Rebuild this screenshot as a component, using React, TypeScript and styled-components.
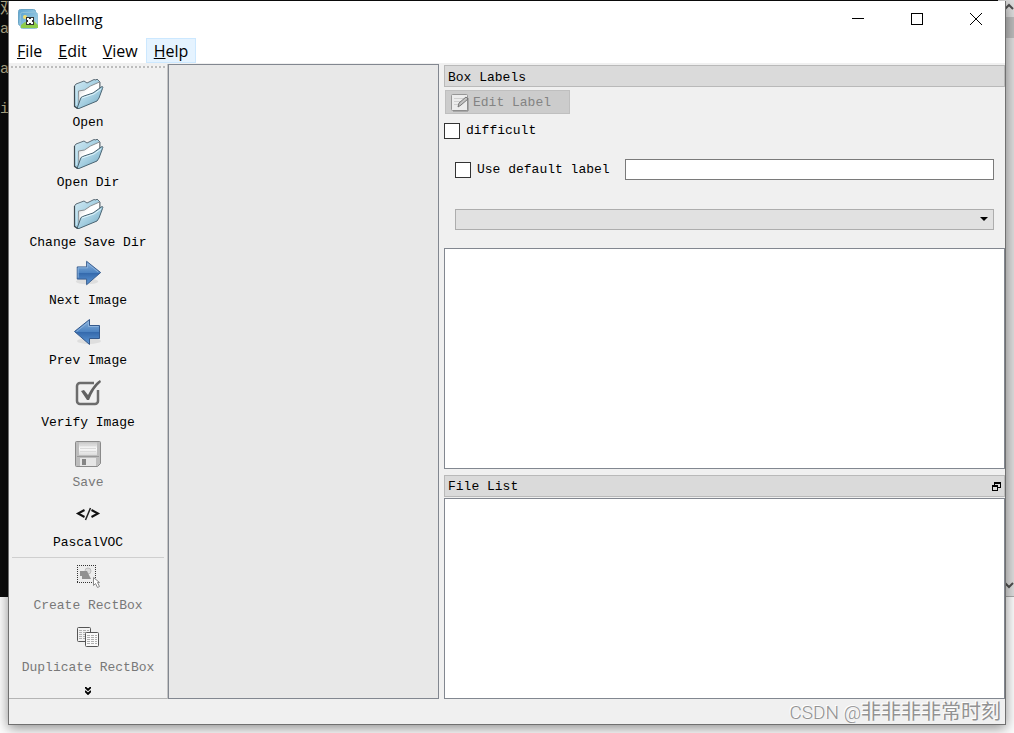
import React from 'react';
import styled, { createGlobalStyle } from 'styled-components';

const MONO = '"Liberation Mono", "DejaVu Sans Mono", monospace';
const UI = '"Open Sans", "Noto Sans", sans-serif';

const GlobalStyle = createGlobalStyle`
  *, *::before, *::after { box-sizing: border-box; }
  body { margin: 0; background: #fff; color: #000; font: 13px/16px ${MONO}; }
  button, input, select { font: inherit; color: inherit; }
`;

const Desktop = styled.div`
  position: relative;
  display: flex;
  min-height: 100vh;
  padding: 1px 8px 8px;
  overflow: hidden;
  background: #fdfdfd;
`;

const Terminal = styled.div`
  position: absolute;
  top: 0;
  left: 0;
  right: 0;
  height: 597px;
  display: flex;
  justify-content: space-between;
  background: #0c0c0c;
`;

const TerminalText = styled.pre`
  margin: 0;
  color: #b8b08c;
  font: 15px/20px "Liberation Mono", "Noto Sans CJK SC", monospace;
`;

const ScrollTrack = styled.div`
  width: 16px;
  display: flex;
  flex-direction: column;
  align-items: flex-end;
  background: #dedede;
  border-bottom: 1px solid #aaa;

  svg { display: block; }
`;

const ScrollThumb = styled.div`
  width: 100%;
  height: 21px;
  margin-bottom: auto;
  background: #bcbcbc;
`;

const Window = styled.main`
  position: relative;
  flex: 1;
  min-width: 0;
  display: flex;
  flex-direction: column;
  background: #f0f0f0;
  border: 1px solid #707070;
  border-top: 0;
  box-shadow: 0 3px 12px rgba(0, 0, 0, 0.45);
`;

const TitleBar = styled.header`
  display: flex;
  align-items: center;
  height: 37px;
  padding: 0 0 2px 9px;
  background: #fff;
`;

const Title = styled.h1`
  flex: 1;
  margin: 0 0 0 5px;
  font: 400 15px/20px ${UI};
`;

const WindowButton = styled.button`
  display: grid;
  place-items: center;
  width: 59px;
  height: 34px;
  padding: 0;
  border: 0;
  background: none;
`;

const MenuBar = styled.nav`
  display: flex;
  height: 25px;
  background: #fff;
`;

const MenuItem = styled.button<{ $active?: boolean }>`
  height: 25px;
  padding: 0 7px;
  border: 1px solid ${p => (p.$active ? '#cce8ff' : 'transparent')};
  background: ${p => (p.$active ? '#e5f3ff' : 'none')};
  font: 16px/20px ${UI};

  &::first-letter { text-decoration: underline; }
`;

const Body = styled.div`
  flex: 1;
  display: grid;
  grid-template-columns: 159px minmax(160px, 271fr) minmax(380px, 566fr);
  border-top: 1px solid #f0f0f0;
`;

const ToolBar = styled.aside`
  display: flex;
  flex-direction: column;
  border-right: 1px solid #c4c4c4;
  border-bottom: 1px solid #b4b4b4;
`;

const Grip = styled.div`
  height: 2px;
  margin: 2px 0 9px 2px;
  background: repeating-linear-gradient(90deg, #bdbdbd 0 2px, #f4f4f4 2px 4px);
`;

const ToolButton = styled.button<{ $icon: number }>`
  display: flex;
  flex-direction: column;
  align-items: center;
  gap: 1px;
  padding: 1px 0 2px;
  border: 0;
  background: none;
  line-height: 24px;
  white-space: nowrap;

  &:disabled { color: #787878; }
  svg { display: block; height: ${p => p.$icon}px; }
`;

const Separator = styled.hr`
  width: calc(100% - 6px);
  height: 1px;
  margin: 0 auto;
  border: 0;
  background: #cfcfcf;
`;

const MoreButton = styled.button`
  display: grid;
  place-items: center;
  height: 14px;
  margin-top: auto;
  padding: 0;
  border: 0;
  background: none;
`;

const Canvas = styled.section`
  background: #e8e8e8;
  border: 1px solid #828790;
`;

const Docks = styled.div`
  display: flex;
  flex-direction: column;
  padding-left: 5px;
`;

const Dock = styled.section`
  flex: 1 1 auto;
  display: flex;
  flex-direction: column;
`;

const DockTitle = styled.h2`
  display: flex;
  align-items: center;
  justify-content: space-between;
  height: 22px;
  margin: 1px 0;
  padding: 3px 3px 0;
  border: 1px solid #b9b9b9;
  background: #dadada;
  font: 400 13px/16px ${MONO};
`;

const IconButton = styled.button`
  display: grid;
  padding: 0 0 2px;
  border: 0;
  background: none;
`;

const EditButton = styled.button`
  align-self: flex-start;
  display: flex;
  align-items: center;
  gap: 4px;
  width: 125px;
  height: 24px;
  margin: 2px 0 9px 1px;
  padding: 2px 5px 0;
  border: 1px solid #bfbfbf;
  background: #ccc;

  &:disabled { color: #838383; }
`;

const CheckLabel = styled.label`
  display: flex;
  align-items: center;
  gap: 6px;
  white-space: nowrap;
`;

const CheckBox = styled.input.attrs({ type: 'checkbox' })`
  appearance: none;
  width: 16px;
  height: 16px;
  margin: 0;
  border: 1px solid #333;
  background: #fff;
`;

const FormRow = styled.div`
  display: flex;
  align-items: center;
  gap: 15px;
  margin: 20px 11px 29px;
`;

const TextInput = styled.input`
  flex: 1;
  min-width: 0;
  height: 21px;
  padding: 0 4px;
  border: 1px solid #7a7a7a;
  background: #fff;
`;

const SelectBox = styled.div`
  position: relative;
  display: flex;
  margin: 0 11px 18px;

  svg { position: absolute; right: 6px; top: 8px; pointer-events: none; }
`;

const Select = styled.select`
  appearance: none;
  width: 100%;
  height: 21px;
  border: 1px solid #adadad;
  border-radius: 0;
  background: #e1e1e1;
`;

const ListArea = styled.div<{ $basis: number }>`
  flex: 1 1 ${p => p.$basis}px;
  background: #fff;
  border: 1px solid #828790;
`;

const DockGap = styled.div`
  height: 5px;
`;

const StatusBar = styled.footer`
  height: 25px;
`;

const Watermark = styled.div`
  position: absolute;
  right: 13px;
  bottom: 8px;
  color: #929292;
  font: 20px/24px "Noto Sans CJK SC", sans-serif;
  text-shadow: -1px -1px 0 #fff;
  white-space: nowrap;
`;

const WatermarkSite = styled.span`
  font: 300 19px/24px Roboto, sans-serif;
`;

const Gradients = () => (
  <svg width="0" height="0" style={{ position: 'absolute' }} aria-hidden="true">
    <defs>
      <linearGradient id="folder" x1="0" y1="0" x2="1" y2="1">
        <stop offset="0" stopColor="#d5ecf5" />
        <stop offset="0.5" stopColor="#a5cfe1" />
        <stop offset="1" stopColor="#6ea5be" />
      </linearGradient>
      <linearGradient id="paper" x1="0" y1="0" x2="1" y2="1">
        <stop offset="0" stopColor="#c7c9ca" />
        <stop offset="0.4" stopColor="#fff" />
      </linearGradient>
      <linearGradient id="arrow" x1="0" y1="0" x2="0" y2="1">
        <stop offset="0" stopColor="#8bb3dc" />
        <stop offset="0.5" stopColor="#4b82c1" />
        <stop offset="0.52" stopColor="#356aad" />
        <stop offset="1" stopColor="#5f98d6" />
      </linearGradient>
      <linearGradient id="sky" x1="0" y1="0" x2="1" y2="1">
        <stop offset="0" stopColor="#5da4d0" />
        <stop offset="1" stopColor="#b6dceb" />
      </linearGradient>
      <linearGradient id="metal" x1="0" y1="0" x2="0" y2="1">
        <stop offset="0" stopColor="#c4c4c4" />
        <stop offset="0.5" stopColor="#fafafa" />
        <stop offset="1" stopColor="#dcdcdc" />
      </linearGradient>
    </defs>
  </svg>
);

const AppIcon = () => (
  <svg width="20" height="20" viewBox="0 0 20 20" aria-hidden="true">
    <rect x="0.5" y="0.5" width="17" height="16" rx="2" fill="url(#sky)" stroke="#6aa5c6" />
    <rect x="2.5" y="3.5" width="17" height="16" rx="2" fill="url(#sky)" stroke="#8fc1da" />
    <circle cx="7" cy="8" r="2" fill="#f3df71" />
    <path d="M3 19v-3l4-3 4 2 4-4 5 5v3z" fill="#8dcc4b" />
    <rect x="8" y="8" width="8" height="8" fill="#333" />
    <path d="M9 9h2v1h2V9h2v2h-1v2h1v2h-2v-1h-2v1H9v-2h1v-2H9z" fill="#fff" />
  </svg>
);

const FolderIcon = () => (
  <svg width="32" height="32" viewBox="0 0 32 32" aria-hidden="true">
    <path d="M2.500 8L4 6l8-3 3 2 7-3.500 2 .5 1-1 3 3v10L6 30.500 2.500 28z" fill="url(#folder)" stroke="#5f6f79" />
    <path d="M6.500 13l6-1 6-4 9-4v12L7 28z" fill="url(#paper)" stroke="#8b9093" />
    <path d="M5 30.500l4-11 3-1.500 9-3 9-6.500c1 0 1 1 .5 2L27 20l-2 3-18 7.500z" fill="url(#folder)" stroke="#4a6472" />
    <path d="M10 20l12-4 7-5" fill="none" stroke="#dff4fb" />
    <path d="M2.500 8v20.500l3 2" fill="none" stroke="#3f4a50" strokeWidth="1.200" />
    <path d="M4.500 9v18" stroke="#c5e3ef" />
  </svg>
);

const ArrowIcon = ({ left }: { left?: boolean }) => (
  <svg width="32" height="32" viewBox="0 0 32 32" aria-hidden="true">
    <ellipse cx={left ? 17 : 15} cy="25" rx="12" ry="3" fill="#dedede" />
    <path
      d={left ? 'M2.500 15.500L17.500 3.500V9.500H27.500V22.500H17.500V28.500z' : 'M29.500 15.500L14.500 3.500V9.500H4.500V22.500H14.500V28.500z'}
      fill="url(#arrow)"
      stroke="#34598c"
    />
    <path d={left ? 'M4.500 15.500L16.500 6V10.500H26.500' : 'M5.500 21V10.500H15.500V6L27 15'} fill="none" stroke="#8bb2dd" />
  </svg>
);

const VerifyIcon = () => (
  <svg width="32" height="32" viewBox="0 0 32 32" aria-hidden="true">
    <path d="M22 6H8a3 3 0 0 0-3 3v15a3 3 0 0 0 3 3h15a3 3 0 0 0 3-3V13" fill="none" stroke="#6c6c6c" strokeWidth="2.500" />
    <path d="M9 14l3-1 4 5C19 12 23 6 28 3l1 2C24 9 20 15 17 23h-2z" fill="#626262" />
  </svg>
);

const SaveIcon = () => (
  <svg width="32" height="32" viewBox="0 0 32 32" aria-hidden="true">
    <path d="M4.500 3.500h23a1 1 0 0 1 1 1v21l-3 3h-21a1 1 0 0 1-1-1v-23a1 1 0 0 1 1-1z" fill="#bdbdbd" stroke="#8a8a8a" />
    <path d="M7 4h18v13H7z" fill="url(#metal)" />
    <path d="M8 7.500h16M8 10.500h16M8 13.500h16" stroke="#dadada" />
    <path d="M5 18.500h22" stroke="#999" />
    <path d="M8 20h16v8H8z" fill="#e6e6e6" />
    <path d="M10 21h4v6h-4z" fill="#858585" />
  </svg>
);

const CodeIcon = () => (
  <svg width="32" height="32" viewBox="0 0 32 32" aria-hidden="true">
    <path d="M12.500 12L6 15.500l6.500 3.500M19.500 12l6.500 3.500-6.500 3.500" fill="none" stroke="#111" strokeWidth="2" />
    <path d="M18.500 10l-5 12" stroke="#222" strokeWidth="1.500" />
  </svg>
);

const CreateIcon = () => (
  <svg width="32" height="32" viewBox="0 0 32 32" aria-hidden="true">
    <rect x="6" y="6" width="17" height="16" fill="#ededed" />
    <path d="M5 5.500h19M5 22.500h19M5.500 5v18M23.500 5v18" stroke="#333" strokeDasharray="1 1" />
    <circle cx="16" cy="11" r="3" fill="#dcdcdc" stroke="#bdbdbd" />
    <path d="M8 11h7l4 8h-9v-3H8z" fill="#919191" />
    <path d="M21.500 17.500v8l2-2 2 4 2-1-2-4h2z" fill="#fff" stroke="#888" />
  </svg>
);

const CopyIcon = () => (
  <svg width="32" height="32" viewBox="0 0 32 32" aria-hidden="true">
    <rect x="5.500" y="5.500" width="13" height="14" rx="1" fill="#f2f2f2" stroke="#555" />
    <path d="M7 8.500h10M7 10.500h10M7 12.500h10M7 14.500h10M7 16.500h10" stroke="#b0b0b0" strokeDasharray="3 1" />
    <rect x="13.500" y="10.500" width="13" height="14" rx="1" fill="#fafafa" stroke="#555" />
    <path d="M15 13.500h10M15 15.500h10M15 17.500h10M15 19.500h10M15 21.500h10" stroke="#b0b0b0" strokeDasharray="3 1" />
  </svg>
);

const EditIcon = () => (
  <svg width="18" height="18" viewBox="0 0 18 18" aria-hidden="true">
    <rect x="0.500" y="0.500" width="16" height="16" rx="1" fill="#ececec" stroke="#969696" />
    <path d="M3 4.500h10M3 7.500h8M3 10.500h6" stroke="#cfcfcf" />
    <path d="M2 17h15V4" fill="none" stroke="#848484" />
    <path d="M7 13l1-4 7-6 2 2-7 6z" fill="#c3c3c3" stroke="#777" />
  </svg>
);

const TOOLS: { label: string; icon: React.ReactNode; size?: number; disabled?: boolean }[] = [
  { label: 'Open', icon: <FolderIcon /> },
  { label: 'Open Dir', icon: <FolderIcon /> },
  { label: 'Change Save Dir', icon: <FolderIcon /> },
  { label: 'Next Image', icon: <ArrowIcon />, size: 30 },
  { label: 'Prev Image', icon: <ArrowIcon left /> },
  { label: 'Verify Image', icon: <VerifyIcon />, size: 34 },
  { label: 'Save', icon: <SaveIcon />, disabled: true },
  { label: 'PascalVOC', icon: <CodeIcon /> },
];

const SHAPE_TOOLS = [
  { label: 'Create RectBox', icon: <CreateIcon />, size: 34, disabled: true },
  { label: 'Duplicate RectBox', icon: <CopyIcon />, size: 34, disabled: true },
];

const renderTool = (t: (typeof TOOLS)[number]) => (
  <ToolButton key={t.label} $icon={t.size ?? 32} disabled={t.disabled}>
    {t.icon}
    {t.label}
  </ToolButton>
);

export default function App() {
  return (
    <Desktop>
      <GlobalStyle />
      <Gradients />
      <Terminal aria-hidden="true">
        <TerminalText>{'双\na\n\na\n\nin'}</TerminalText>
        <ScrollTrack>
          <svg width="10" height="17" viewBox="0 0 10 17">
            <path d="M1 9l4-4 4 4" fill="none" stroke="#505050" strokeWidth="2" />
          </svg>
          <ScrollThumb />
          <svg width="10" height="17" viewBox="0 0 10 17">
            <path d="M1 4l4 4 4-4" fill="none" stroke="#505050" strokeWidth="2" />
          </svg>
        </ScrollTrack>
      </Terminal>
      <Window>
        <TitleBar>
          <AppIcon />
          <Title>labelImg</Title>
          <WindowButton aria-label="Minimize">
            <svg width="12" height="12"><path d="M0 5.500h12" stroke="#000" /></svg>
          </WindowButton>
          <WindowButton aria-label="Maximize">
            <svg width="12" height="12"><rect x="0.500" y="0.500" width="11" height="11" fill="none" stroke="#000" /></svg>
          </WindowButton>
          <WindowButton aria-label="Close">
            <svg width="12" height="12"><path d="M0 0l12 12M12 0L0 12" stroke="#000" /></svg>
          </WindowButton>
        </TitleBar>
        <MenuBar>
          <MenuItem>File</MenuItem>
          <MenuItem>Edit</MenuItem>
          <MenuItem>View</MenuItem>
          <MenuItem $active>Help</MenuItem>
        </MenuBar>
        <Body>
          <ToolBar>
            <Grip />
            {TOOLS.map(renderTool)}
            <Separator />
            {SHAPE_TOOLS.map(renderTool)}
            <MoreButton aria-label="More tools">
              <svg width="6" height="8"><path d="M0 0l3 3 3-3M0 4l3 3 3-3" fill="none" stroke="#000" strokeWidth="1.800" /></svg>
            </MoreButton>
          </ToolBar>
          <Canvas aria-label="Canvas" />
          <Docks>
            <Dock>
              <DockTitle>Box Labels</DockTitle>
              <EditButton disabled>
                <EditIcon />
                Edit Label
              </EditButton>
              <CheckLabel>
                <CheckBox />
                difficult
              </CheckLabel>
              <FormRow>
                <CheckLabel>
                  <CheckBox />
                  Use default label
                </CheckLabel>
                <TextInput aria-label="Default label" />
              </FormRow>
              <SelectBox>
                <Select aria-label="Label filter" />
                <svg width="8" height="5"><path d="M0 0h8L4 4z" fill="#000" /></svg>
              </SelectBox>
              <ListArea $basis={199} />
            </Dock>
            <DockGap />
            <Dock>
              <DockTitle>
                File List
                <IconButton aria-label="Float">
                  <svg width="9" height="9">
                    <path d="M2 0h7v6H6V5h2V2H3v1H2zM0 3h6v6H0zM1 5v3h4V5z" fill="#000" fillRule="evenodd" />
                  </svg>
                </IconButton>
              </DockTitle>
              <ListArea $basis={180} />
            </Dock>
          </Docks>
        </Body>
        <StatusBar />
      </Window>
      <Watermark>
        <WatermarkSite>CSDN @</WatermarkSite>非非非非常时刻
      </Watermark>
    </Desktop>
  );
}
